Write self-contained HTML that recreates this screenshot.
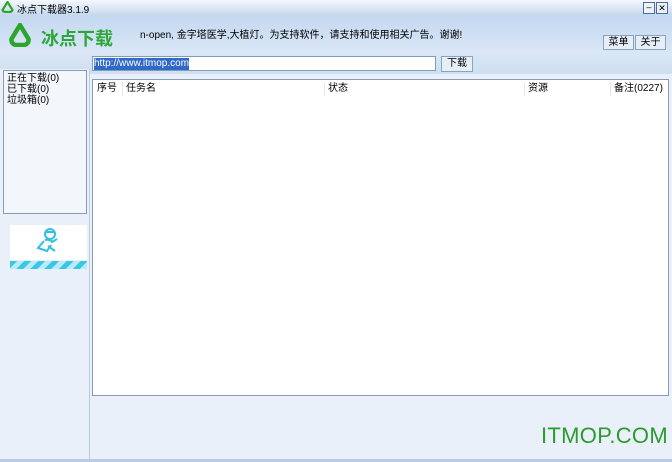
<!DOCTYPE html><html><head><meta charset="utf-8"><style>
*{margin:0;padding:0;box-sizing:border-box}
body{width:672px;height:462px;overflow:hidden;background:#dfe9f6;font-family:"Liberation Sans","Noto Sans CJK SC",sans-serif;font-size:11px;color:#000;position:relative}
.a{position:absolute}
</style></head><body>
<div class="a" style="left:0;top:0;width:672px;height:15px;background:linear-gradient(#f4f8fd,#c7d9ef)"></div>
<svg class="a" style="left:1px;top:1px" width="13" height="12" viewBox="0 0 13 12"><path d="M6.5 1 L11.5 9 A3 3 0 0 1 9 11 H4 A3 3 0 0 1 1.5 9 Z" fill="none" stroke="#2da52d" stroke-width="2.2"/></svg>
<div class="a" style="left:17px;top:1px;font-size:10px">冰点下载器3.1.9</div>
<div class="a" style="left:643px;top:2px;width:12px;height:12px;border:1px solid #4a6e9a;background:#eef3f9;font-size:9px;line-height:9px;text-align:center">–</div>
<div class="a" style="left:656px;top:2px;width:12px;height:12px;border:1px solid #4a6e9a;background:#eef3f9;font-size:9px;line-height:10px;text-align:center">✕</div>
<div class="a" style="left:0;top:15px;width:672px;height:37px;background:linear-gradient(#c4d8f1,#d9e6f6)"></div>
<svg class="a" style="left:9px;top:23px" width="22" height="24" viewBox="0 0 22 24"><path d="M11 2 L19.5 16 A5 5 0 0 1 15 22 H7 A5 5 0 0 1 2.5 16 Z" fill="none" stroke="#2da52d" stroke-width="4.5"/></svg>
<div class="a" style="left:41px;top:25px;font-size:18px;font-weight:bold;color:#2ea63a">冰点下载</div>
<div class="a" style="left:140px;top:26px;font-size:10px">n-open, 金字塔医学,大植灯。为支持软件，请支持和使用相关广告。谢谢!</div>
<div class="a" style="left:603px;top:35px;width:31px;height:15px;border:1px solid #8aa3bf;background:#e6eef8;font-size:10px;text-align:center;line-height:13px">菜单</div>
<div class="a" style="left:635px;top:35px;width:31px;height:15px;border:1px solid #8aa3bf;background:#e6eef8;font-size:10px;text-align:center;line-height:13px">关于</div>
<div class="a" style="left:0;top:52px;width:672px;height:22px;background:linear-gradient(#dbe7f5,#cddff2)"></div>
<div class="a" style="left:92px;top:56px;width:344px;height:15px;border:1px solid #7f9db9;background:#fff"><span style="background:#3169c6;color:#fff;font-size:10px;line-height:12px;display:inline-block;margin:1px">http://www.itmop.com</span></div>
<div class="a" style="left:441px;top:56px;width:32px;height:16px;border:1px solid #8aa3bf;background:#e6eef8;font-size:10px;text-align:center;line-height:14px">下载</div>
<div class="a" style="left:0;top:69px;width:90px;height:393px;background:#e9f0fa;border-right:1px solid #b8cbe3"></div>
<div class="a" style="left:3px;top:70px;width:84px;height:144px;border:1px solid #8a9cb3;background:#f3f7fc;font-size:10px;line-height:11px;padding:2px 0 0 3px">正在下载(0)<br>已下载(0)<br>垃圾箱(0)</div>
<div class="a" style="left:10px;top:225px;width:77px;height:35px;background:#fff"></div>
<svg class="a" style="left:30px;top:226px" width="34" height="32" viewBox="0 0 34 32" fill="none" stroke="#33bfe0" stroke-width="2"><circle cx="20" cy="8" r="5"/><path d="M15 6 h10 M15 14 q5 -1 7 2 l5 -3 M14 15 l-6 7 l9 3 l4 -6 M18 20 l7 5"/></svg>
<div class="a" style="left:10px;top:261px;width:77px;height:8px;background:repeating-linear-gradient(135deg,#3cc6e6 0 5px,#b9ecf8 5px 10px)"></div>
<div class="a" style="left:90px;top:74px;width:582px;height:388px;background:#e9f0fa"></div>
<div class="a" style="left:92px;top:79px;width:577px;height:317px;border:1px solid #8a9cb3;background:#fff"></div>
<div class="a" style="left:93px;top:80px;width:575px;height:18px;font-size:10px;line-height:18px">
<span class="a" style="left:4px">序号</span><span class="a" style="left:33px">任务名</span><span class="a" style="left:235px">状态</span><span class="a" style="left:435px">资源</span><span class="a" style="left:521px">备注(0227)</span>
<span class="a" style="left:29px;top:2px;width:1px;height:14px;background:#e6e6e6"></span><span class="a" style="left:231px;top:2px;width:1px;height:14px;background:#e6e6e6"></span><span class="a" style="left:431px;top:2px;width:1px;height:14px;background:#e6e6e6"></span><span class="a" style="left:517px;top:2px;width:1px;height:14px;background:#e6e6e6"></span></div>
<div class="a" style="left:541px;top:423px;font-size:22px;color:#2e9a2e;letter-spacing:0.3px">ITMOP.COM</div>
<div class="a" style="left:0;top:459px;width:672px;height:3px;background:#b8cbe3"></div>
</body></html>
